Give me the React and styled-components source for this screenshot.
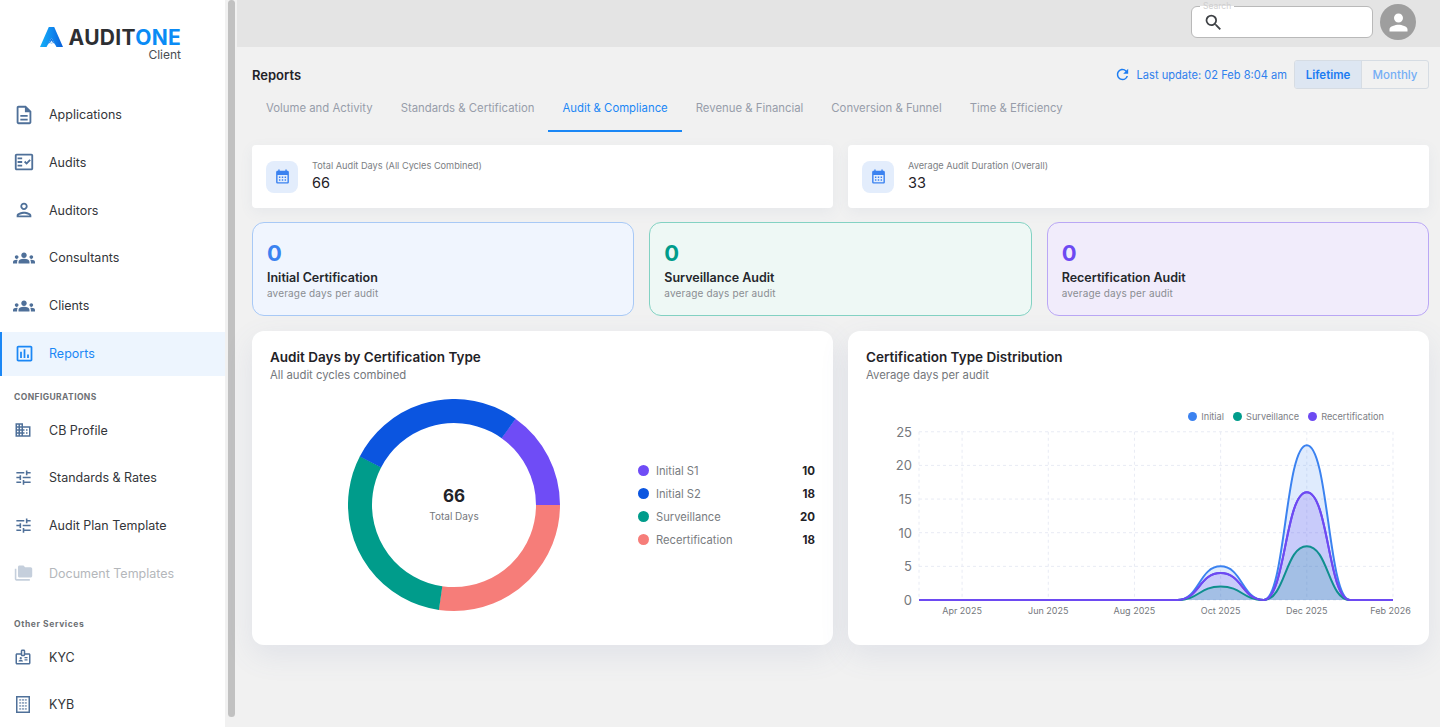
import React from "react";
import styled, { createGlobalStyle } from "styled-components";
import {
  MdOutlineDescription,
  MdOutlineFactCheck,
  MdOutlinePerson,
  MdGroups,
  MdOutlineAssessment,
  MdOutlineBusiness,
  MdOutlineTune,
  MdFolderCopy,
  MdOutlineBadge,
  MdSearch,
  MdPerson,
  MdRefresh,
  MdCalendarMonth,
} from "react-icons/md";

const GlobalStyle = createGlobalStyle`
  html, body {
    margin: 0;
    height: 100%;
    overflow: hidden;
    font-family: "Inter", "Liberation Sans", sans-serif;
    color: #1f2227;
  }
  * { box-sizing: border-box; }
`;

const Page = styled.div`
  display: flex;
  width: 1440px;
  height: 727px;
  overflow: hidden;
`;

const Sidebar = styled.aside`
  width: 225px;
  flex: none;
  background: #fff;
  overflow: hidden;
`;

const LogoBlock = styled.div`
  height: 93px;
  padding: 27px 0 0 40px;
  display: flex;
  gap: 6px;
`;

const LogoText = styled.div`
  display: flex;
  flex-direction: column;
  align-items: flex-end;
  width: 112px;
`;

const LogoName = styled.div`
  font-size: 21px;
  line-height: 22px;
  font-weight: 700;
  letter-spacing: 0.3px;
  color: #2d2f33;
  white-space: nowrap;
  span { color: #0a8bf5; }
`;

const LogoSub = styled.div`
  font-size: 12px;
  line-height: 11px;
  font-weight: 400;
  color: #4a4d52;
`;

const NavItem = styled.div`
  height: 44px;
  margin-bottom: 3.75px;
  padding-bottom: 1px;
  display: flex;
  align-items: center;
  gap: ${(p) => (p.$sub ? "15px" : "14px")};
  padding-left: ${(p) => (p.$active ? "11px" : p.$sub ? "12px" : "13px")};
  font-size: 12.5px;
  font-weight: 400;
  color: ${(p) => (p.$active ? "#1b87f5" : p.$disabled ? "#b4b7bb" : "#33363a")};
  background: ${(p) => (p.$active ? "#edf5fe" : "transparent")};
  border-left: ${(p) => (p.$active ? "2px solid #1b87f5" : "0")};
  svg {
    flex: none;
    color: ${(p) => (p.$active ? "#1b87f5" : p.$disabled ? "#c5cfdc" : "#4f7099")};
  }
`;

const IconSlot = styled.span`
  width: 22px;
  height: 22px;
  display: flex;
  align-items: center;
  justify-content: center;
  flex: none;
`;

const SectionLabel = styled.div`
  padding-left: 14px;
  font-size: 8.5px;
  line-height: 12px;
  font-weight: 700;
  letter-spacing: ${(p) => (p.$caps ? "0.4px" : "0.6px")};
  color: #6d7074;
  margin: ${(p) => p.$margin};
`;

const ScrollTrack = styled.div`
  width: 12px;
  flex: none;
  background: #f1f1f1;
  padding: 0 2px 0 3px;
`;

const ScrollThumb = styled.div`
  height: 717px;
  background: #c1c1c1;
  border-radius: 4px;
`;

const Main = styled.div`
  flex: 1;
  min-width: 0;
  display: flex;
  flex-direction: column;
  background: #f1f1f1;
`;

const TopBar = styled.header`
  height: 47px;
  flex: none;
  background: #e4e4e4;
  display: flex;
  justify-content: flex-end;
  align-items: flex-start;
  gap: 7px;
  padding: 4px 24px 0 0;
`;

const SearchBox = styled.div`
  position: relative;
  width: 182px;
  height: 32px;
  margin-top: 2px;
  background: #fff;
  border: 1px solid #b9b9b9;
  border-radius: 6px;
  display: flex;
  align-items: center;
  padding-left: 11px;
  color: #3f4246;
`;

const SearchLabel = styled.span`
  position: absolute;
  top: -6px;
  left: 8px;
  padding: 0 3px;
  font-size: 8.5px;
  line-height: 10px;
  color: #cfcfcf;
  background: linear-gradient(180deg, #e4e4e4 50%, #fff 50%);
`;

const Avatar = styled.div`
  width: 36px;
  height: 36px;
  border-radius: 50%;
  background: #9e9e9e;
  color: #fff;
  display: flex;
  align-items: center;
  justify-content: center;
`;

const Content = styled.div`
  flex: 1;
  min-width: 0;
  padding: 13px 11px 0 15px;
  display: flex;
  flex-direction: column;
`;

const HeaderRow = styled.div`
  height: 29px;
  display: flex;
  align-items: center;
  justify-content: space-between;
`;

const PageTitle = styled.h1`
  margin: 0;
  font-size: 13px;
  font-weight: 600;
  color: #1f2227;
`;

const HeaderActions = styled.div`
  display: flex;
  align-items: center;
`;

const LastUpdate = styled.div`
  display: flex;
  align-items: center;
  gap: 6px;
  margin-right: 7px;
  font-size: 11.1px;
  color: #2f80ed;
  white-space: nowrap;
  svg { color: #1b7cf2; }
`;

const Toggle = styled.div`
  display: flex;
  height: 29px;
  border: 1px solid #d6dce3;
  border-radius: 3px;
  overflow: hidden;
`;

const ToggleButton = styled.div`
  width: ${(p) => p.$w}px;
  display: flex;
  align-items: center;
  justify-content: center;
  font-size: 11.5px;
  font-weight: ${(p) => (p.$active ? 600 : 500)};
  color: ${(p) => (p.$active ? "#1b7cf2" : "#75aef5")};
  background: ${(p) => (p.$active ? "#dde6f2" : "transparent")};
  border-right: ${(p) => (p.$active ? "1px solid #d6dce3" : "0")};
`;

const Tabs = styled.nav`
  height: 40px;
  margin-top: 3px;
  display: flex;
`;

const Tab = styled.div`
  padding: 0 14px;
  height: 40px;
  display: flex;
  align-items: center;
  padding-bottom: 6px;
  font-size: 11.35px;
  font-weight: 400;
  white-space: nowrap;
  color: ${(p) => (p.$active ? "#1b87f5" : "#979daa")};
  border-bottom: 2px solid ${(p) => (p.$active ? "#1b87f5" : "transparent")};
`;

const StatRow = styled.div`
  margin-top: 13px;
  display: grid;
  grid-template-columns: repeat(2, minmax(0, 1fr));
  gap: 15px;
`;

const StatCard = styled.div`
  height: 63px;
  background: #fff;
  border-radius: 4px;
  box-shadow: 0 4px 14px rgba(90, 110, 160, 0.07);
  display: flex;
  align-items: center;
  gap: 14px;
  padding-left: 14px;
`;

const StatIcon = styled.div`
  width: 32px;
  height: 32px;
  border-radius: 8px;
  background: #e3edfc;
  color: #3b82f0;
  display: flex;
  align-items: center;
  justify-content: center;
`;

const StatLabel = styled.div`
  font-size: 9.2px;
  line-height: 12px;
  color: #7b7e83;
`;

const StatValue = styled.div`
  margin-top: 1px;
  font-size: 14.5px;
  line-height: 20px;
  font-weight: 400;
  color: #1f2227;
`;

const TONES = {
  blue: { bg: "#f0f5fe", border: "#a8c9f6", num: "#3b82f0" },
  green: { bg: "#eef8f5", border: "#83d2c3", num: "#009c8b" },
  purple: { bg: "#f1ecfb", border: "#baa7f5", num: "#6d4af2" },
};

const TypeRow = styled.div`
  margin-top: 14px;
  display: grid;
  grid-template-columns: repeat(3, minmax(0, 1fr));
  gap: 15px;
`;

const TypeCard = styled.div`
  height: 94px;
  padding: 17px 14px 0;
  border-radius: 12px;
  background: ${(p) => TONES[p.$tone].bg};
  border: 1px solid ${(p) => TONES[p.$tone].border};
`;

const TypeNumber = styled.div`
  font-size: 22px;
  line-height: 26px;
  font-weight: 700;
  color: ${(p) => TONES[p.$tone].num};
`;

const TypeTitle = styled.div`
  margin-top: 4px;
  font-size: 12.5px;
  line-height: 16px;
  font-weight: 600;
  color: #24272b;
`;

const TypeSub = styled.div`
  font-size: 10px;
  line-height: 14px;
  color: #8a8d92;
  letter-spacing: 0.15px;
`;

const ChartRow = styled.div`
  margin-top: 15px;
  display: grid;
  grid-template-columns: repeat(2, minmax(0, 1fr));
  gap: 15px;
`;

const ChartCard = styled.section`
  height: 314px;
  padding: 17px 18px 0;
  background: #fff;
  border-radius: 12px;
  box-shadow: 0 10px 30px rgba(90, 110, 160, 0.11);
`;

const ChartTitle = styled.h2`
  margin: 0;
  font-size: 13.5px;
  line-height: 18px;
  font-weight: 600;
  color: #1f2227;
`;

const ChartSub = styled.div`
  font-size: 11.3px;
  line-height: 18px;
  color: #74777c;
`;

const DonutBody = styled.div`
  margin-top: 15px;
  display: grid;
  grid-template-columns: 1fr 177px;
  align-items: center;
`;

const DonutWrap = styled.div`
  position: relative;
  width: 212px;
  height: 212px;
  justify-self: center;
`;

const DonutCenter = styled.div`
  position: absolute;
  inset: 0;
  padding-top: 5px;
  display: flex;
  flex-direction: column;
  align-items: center;
  justify-content: center;
`;

const DonutTotal = styled.div`
  margin-top: -7px;
  font-size: 17px;
  line-height: 22px;
  font-weight: 700;
  color: #1f2227;
`;

const DonutCaption = styled.div`
  margin-top: 2px;
  font-size: 10px;
  line-height: 14px;
  color: #74777c;
`;

const Legend = styled.div`
  display: flex;
  flex-direction: column;
`;

const LegendRow = styled.div`
  height: 23px;
  display: flex;
  align-items: center;
  font-size: 11.2px;
  color: #797c81;
`;

const Dot = styled.span`
  width: ${(p) => p.$size}px;
  height: ${(p) => p.$size}px;
  border-radius: 50%;
  flex: none;
  background: ${(p) => p.$color};
`;

const LegendName = styled.span`
  flex: 1;
  margin-left: 7px;
`;

const LegendValue = styled.span`
  font-size: 11.5px;
  font-weight: 700;
  color: #1f2227;
`;

const AreaLegend = styled.div`
  margin-top: 24px;
  height: 16px;
  padding-right: 27px;
  display: flex;
  justify-content: flex-end;
  align-items: center;
  gap: 9px;
  font-size: 9.2px;
  color: #7d8085;
`;

const AreaLegendItem = styled.span`
  display: flex;
  align-items: center;
  gap: 4px;
`;

const ChartSvg = styled.svg`
  display: block;
  text {
    font-family: "Inter", "Liberation Sans", sans-serif;
    fill: #75787d;
  }
`;

const mainNav = [
  ["Applications", MdOutlineDescription, 22],
  ["Audits", MdOutlineFactCheck, 22],
  ["Auditors", MdOutlinePerson, 22],
  ["Consultants", MdGroups, 22],
  ["Clients", MdGroups, 22],
];

const segments = [
  { color: "#6f4cf6", value: 10 },
  { color: "#f67d79", value: 18 },
  { color: "#009c8b", value: 20 },
  { color: "#0b55e0", value: 18 },
];

const X0 = 919;
const MONTH = 43.09;
const Y0 = 600;
const UNIT = 6.73;

// months are counted from Mar 2025
const areaPath = (peakA, peakB, closed) => {
  const x = (m) => X0 + m * MONTH;
  const y = (v) => Y0 - v * UNIT;
  const pts = [
    [0, 0], [6, 0], [7, peakA], [8, 0], [9, peakB], [10, 0], [11, 0],
  ];
  let d = `M${x(0)} ${y(0)}`;
  for (let i = 1; i < pts.length; i++) {
    const [m0, v0] = pts[i - 1];
    const [m1, v1] = pts[i];
    const mid = (x(m0) + x(m1)) / 2;
    d += ` C${mid} ${y(v0)} ${mid} ${y(v1)} ${x(m1)} ${y(v1)}`;
  }
  return closed ? `${d} L${x(11)} ${Y0} L${x(0)} ${Y0} Z` : d;
};

const Logo = () => (
  <svg width="23" height="20" viewBox="0 0 23 20">
    <defs>
      <linearGradient id="logoFill" x1="0" y1="0" x2="1" y2="0">
        <stop offset="0" stopColor="#14b0f7" />
        <stop offset="0.55" stopColor="#0f86ee" />
        <stop offset="1" stopColor="#0a5fd8" />
      </linearGradient>
    </defs>
    <path d="M8.8 0 L14.2 0 L23 20 L16.5 20 L11.5 11 L6.5 20 L0 20 Z" fill="url(#logoFill)" />
    <path d="M11.5 11 L15 17.5 L13 15.5 L11.5 17 L10 15.5 L8 17.5 Z" fill="#0a6fe0" />
    <path d="M10 15.5 L11.5 13.5 L13 15.5 L11.5 17 Z" fill="#d6ecfd" />
  </svg>
);

const TowerIcon = () => (
  <svg width="14" height="17" viewBox="0 0 14 17">
    <rect x="0.75" y="0.75" width="12.5" height="15.5" fill="none" stroke="currentColor" strokeWidth="1.5" />
    {[3, 6, 9, 12].map((y) =>
      [3.2, 6, 8.8].map((x) => (
        <rect key={`${x}-${y}`} x={x} y={y} width="2" height="1.8" fill="currentColor" opacity="0.6" />
      ))
    )}
  </svg>
);

const Donut = () => {
  const r = 94;
  const circumference = 2 * Math.PI * r;
  const total = 66;
  let offset = (35.45 - 90) / 360;
  return (
    <svg width="212" height="212" viewBox="0 0 212 212">
      {segments.map((s) => {
        const share = s.value / total;
        const el = (
          <circle
            key={s.color}
            cx="106"
            cy="106"
            r={r}
            fill="none"
            stroke={s.color}
            strokeWidth="24"
            strokeDasharray={`${share * circumference} ${circumference}`}
            transform={`rotate(${offset * 360} 106 106)`}
          />
        );
        offset += share;
        return el;
      })}
    </svg>
  );
};

const AreaChart = () => {
  const yTicks = [25, 20, 15, 10, 5, 0];
  const xTicks = [
    ["Apr 2025", 1, 0], ["Jun 2025", 3, 0], ["Aug 2025", 5, 0],
    ["Oct 2025", 7, 0], ["Dec 2025", 9, 0], ["Feb 2026", 11, -2.5],
  ];
  const series = [
    { a: 5, b: 23, color: "#3b82f0", fill: "rgba(59,130,240,0.16)" },
    { a: 4, b: 16, color: "#6d4af2", fill: "rgba(109,74,242,0.2)" },
    { a: 2, b: 8, color: "#0f8f8f", fill: "rgba(15,143,143,0.2)" },
  ];
  return (
    <ChartSvg width="545" height="200" viewBox="866 424 545 200">
      {yTicks.map((t) => (
        <g key={t}>
          <line x1={X0} x2={X0 + 11 * MONTH} y1={Y0 - t * UNIT} y2={Y0 - t * UNIT} stroke="#e8ebf4" strokeDasharray="3 3" />
          <text x="912" y={Y0 - t * UNIT + 5} fontSize="13" textAnchor="end">{t}</text>
        </g>
      ))}
      <line x1={X0} x2={X0} y1={Y0 - 25 * UNIT} y2={Y0} stroke="#e8ebf4" strokeDasharray="3 3" />
      {xTicks.map(([label, m, nudge]) => (
        <g key={label}>
          <line x1={X0 + m * MONTH} x2={X0 + m * MONTH} y1={Y0 - 25 * UNIT} y2={Y0} stroke="#e8ebf4" strokeDasharray="3 3" />
          <text x={X0 + m * MONTH + nudge} y="614" fontSize="9" textAnchor="middle">{label}</text>
        </g>
      ))}
      {series.map((s) => (
        <path key={s.color + "f"} d={areaPath(s.a, s.b, true)} fill={s.fill} />
      ))}
      {series.map((s) => (
        <path key={s.color} d={areaPath(s.a, s.b, false)} fill="none" stroke={s.color} strokeWidth="2" />
      ))}
      <path d={areaPath(4, 16, false)} fill="none" stroke="#6d4af2" strokeWidth="2" />
    </ChartSvg>
  );
};

const App = () => (
  <Page>
    <GlobalStyle />
    <Sidebar>
      <LogoBlock>
        <Logo />
        <LogoText>
          <LogoName>AUDIT<span>ONE</span></LogoName>
          <LogoSub>Client</LogoSub>
        </LogoText>
      </LogoBlock>
      {mainNav.map(([label, Icon, size]) => (
        <NavItem key={label}>
          <IconSlot><Icon size={size} /></IconSlot>
          {label}
        </NavItem>
      ))}
      <NavItem $active>
        <IconSlot><MdOutlineAssessment size={21} /></IconSlot>
        Reports
      </NavItem>
      <SectionLabel $caps $margin="15px 0 5.75px">CONFIGURATIONS</SectionLabel>
      <NavItem $sub>
        <IconSlot><MdOutlineBusiness size={18} /></IconSlot>
        CB Profile
      </NavItem>
      <NavItem $sub>
        <IconSlot><MdOutlineTune size={19} /></IconSlot>
        Standards &amp; Rates
      </NavItem>
      <NavItem $sub>
        <IconSlot><MdOutlineTune size={19} /></IconSlot>
        Audit Plan Template
      </NavItem>
      <NavItem $sub $disabled>
        <IconSlot><MdFolderCopy size={19} /></IconSlot>
        Document Templates
      </NavItem>
      <SectionLabel $margin="22.25px 0 5.5px">Other Services</SectionLabel>
      <NavItem $sub>
        <IconSlot><MdOutlineBadge size={18} /></IconSlot>
        KYC
      </NavItem>
      <NavItem $sub>
        <IconSlot><TowerIcon /></IconSlot>
        KYB
      </NavItem>
    </Sidebar>
    <ScrollTrack><ScrollThumb /></ScrollTrack>
    <Main>
      <TopBar>
        <SearchBox>
          <SearchLabel>Search</SearchLabel>
          <MdSearch size={21} />
        </SearchBox>
        <Avatar><MdPerson size={27} /></Avatar>
      </TopBar>
      <Content>
        <HeaderRow>
          <PageTitle>Reports</PageTitle>
          <HeaderActions>
            <LastUpdate>
              <MdRefresh size={17} />
              Last update: 02 Feb 8:04 am
            </LastUpdate>
            <Toggle>
              <ToggleButton $active $w={67}>Lifetime</ToggleButton>
              <ToggleButton $w={66}>Monthly</ToggleButton>
            </Toggle>
          </HeaderActions>
        </HeaderRow>
        <Tabs>
          <Tab>Volume and Activity</Tab>
          <Tab>Standards &amp; Certification</Tab>
          <Tab $active>Audit &amp; Compliance</Tab>
          <Tab>Revenue &amp; Financial</Tab>
          <Tab>Conversion &amp; Funnel</Tab>
          <Tab>Time &amp; Efficiency</Tab>
        </Tabs>
        <StatRow>
          <StatCard>
            <StatIcon><MdCalendarMonth size={17} /></StatIcon>
            <div>
              <StatLabel>Total Audit Days (All Cycles Combined)</StatLabel>
              <StatValue>66</StatValue>
            </div>
          </StatCard>
          <StatCard>
            <StatIcon><MdCalendarMonth size={17} /></StatIcon>
            <div>
              <StatLabel>Average Audit Duration (Overall)</StatLabel>
              <StatValue>33</StatValue>
            </div>
          </StatCard>
        </StatRow>
        <TypeRow>
          <TypeCard $tone="blue">
            <TypeNumber $tone="blue">0</TypeNumber>
            <TypeTitle>Initial Certification</TypeTitle>
            <TypeSub>average days per audit</TypeSub>
          </TypeCard>
          <TypeCard $tone="green">
            <TypeNumber $tone="green">0</TypeNumber>
            <TypeTitle>Surveillance Audit</TypeTitle>
            <TypeSub>average days per audit</TypeSub>
          </TypeCard>
          <TypeCard $tone="purple">
            <TypeNumber $tone="purple">0</TypeNumber>
            <TypeTitle>Recertification Audit</TypeTitle>
            <TypeSub>average days per audit</TypeSub>
          </TypeCard>
        </TypeRow>
        <ChartRow>
          <ChartCard>
            <ChartTitle>Audit Days by Certification Type</ChartTitle>
            <ChartSub>All audit cycles combined</ChartSub>
            <DonutBody>
              <DonutWrap>
                <Donut />
                <DonutCenter>
                  <DonutTotal>66</DonutTotal>
                  <DonutCaption>Total Days</DonutCaption>
                </DonutCenter>
              </DonutWrap>
              <Legend>
                <LegendRow><Dot $size={11} $color="#6f4cf6" /><LegendName>Initial S1</LegendName><LegendValue>10</LegendValue></LegendRow>
                <LegendRow><Dot $size={11} $color="#0b55e0" /><LegendName>Initial S2</LegendName><LegendValue>18</LegendValue></LegendRow>
                <LegendRow><Dot $size={11} $color="#009c8b" /><LegendName>Surveillance</LegendName><LegendValue>20</LegendValue></LegendRow>
                <LegendRow><Dot $size={11} $color="#f67d79" /><LegendName>Recertification</LegendName><LegendValue>18</LegendValue></LegendRow>
              </Legend>
            </DonutBody>
          </ChartCard>
          <ChartCard>
            <ChartTitle>Certification Type Distribution</ChartTitle>
            <ChartSub>Average days per audit</ChartSub>
            <AreaLegend>
              <AreaLegendItem><Dot $size={9} $color="#3b82f0" />Initial</AreaLegendItem>
              <AreaLegendItem><Dot $size={9} $color="#009c8b" />Surveillance</AreaLegendItem>
              <AreaLegendItem><Dot $size={9} $color="#6d4af2" />Recertification</AreaLegendItem>
            </AreaLegend>
            <AreaChart />
          </ChartCard>
        </ChartRow>
      </Content>
    </Main>
  </Page>
);

export default App;
